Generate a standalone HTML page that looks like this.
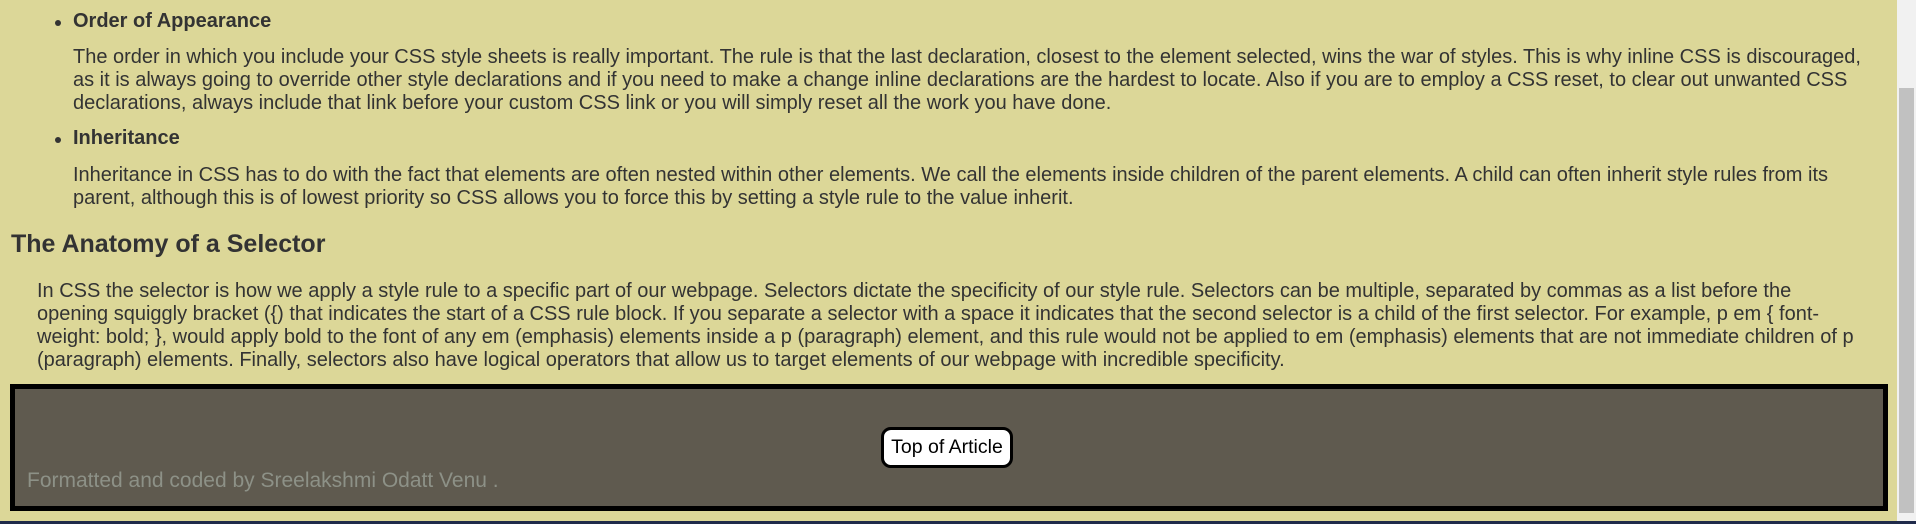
<!DOCTYPE html>
<html><head><meta charset="utf-8"><style>
html,body{margin:0;padding:0;}
body{width:1916px;height:524px;background:#dcd798;font-family:"Liberation Sans",Arial,sans-serif;color:#333;position:relative;overflow:hidden;}
.l{position:absolute;white-space:nowrap;font-size:20px;line-height:23px;}
.b{font-weight:bold;}
.dot{position:absolute;width:6px;height:6px;border-radius:50%;background:#333;}
h2{position:absolute;margin:0;font-size:25px;font-weight:bold;left:11px;top:230px;white-space:nowrap;}
.foot{position:absolute;left:10px;top:384px;width:1868px;height:117px;background:#5f5a4f;border:5px solid #000;}
.btn{position:absolute;left:866px;top:38px;width:132px;height:41px;box-sizing:border-box;background:#fff;border:3px solid #000;border-radius:10px;font-size:19.5px;line-height:35px;text-align:center;color:#000;}
.ft{position:absolute;left:12px;top:80px;font-size:21px;color:#8d9187;white-space:nowrap;}
.sb{position:absolute;right:0;top:0;width:19px;height:521px;background:#f1f1f1;}
.th{position:absolute;right:2px;top:88px;width:15px;height:425px;background:#c1c1c1;}
.bot{position:absolute;left:0;top:521px;width:1916px;height:3px;background:#1f2a4a;}
</style></head><body>
<div class="dot" style="left:55px;top:20px"></div>
<div class="l b" style="left:73px;top:10px">Order of Appearance</div>
<div class="l" style="left:73px;top:46px">The order in which you include your CSS style sheets is really important. The rule is that the last declaration, closest to the element selected, wins the war of styles. This is why inline CSS is discouraged,</div>
<div class="l" style="left:73px;top:69px">as it is always going to override other style declarations and if you need to make a change inline declarations are the hardest to locate. Also if you are to employ a CSS reset, to clear out unwanted CSS</div>
<div class="l" style="left:73px;top:92px">declarations, always include that link before your custom CSS link or you will simply reset all the work you have done.</div>
<div class="dot" style="left:55px;top:137px"></div>
<div class="l b" style="left:73px;top:127px">Inheritance</div>
<div class="l" style="left:73px;top:164px">Inheritance in CSS has to do with the fact that elements are often nested within other elements. We call the elements inside children of the parent elements. A child can often inherit style rules from its</div>
<div class="l" style="left:73px;top:187px">parent, although this is of lowest priority so CSS allows you to force this by setting a style rule to the value inherit.</div>
<h2>The Anatomy of a Selector</h2>
<div class="l" style="left:37px;top:280px">In CSS the selector is how we apply a style rule to a specific part of our webpage. Selectors dictate the specificity of our style rule. Selectors can be multiple, separated by commas as a list before the</div>
<div class="l" style="left:37px;top:303px">opening squiggly bracket ({) that indicates the start of a CSS rule block. If you separate a selector with a space it indicates that the second selector is a child of the first selector. For example, p em { font-</div>
<div class="l" style="left:37px;top:326px">weight: bold; }, would apply bold to the font of any em (emphasis) elements inside a p (paragraph) element, and this rule would not be applied to em (emphasis) elements that are not immediate children of p</div>
<div class="l" style="left:37px;top:349px">(paragraph) elements. Finally, selectors also have logical operators that allow us to target elements of our webpage with incredible specificity.</div>
<div class="foot"><div class="btn">Top of Article</div><div class="ft">Formatted and coded by Sreelakshmi Odatt Venu .</div></div>
<div class="sb"><div class="th"></div></div>
<div class="bot"></div>
</body></html>
